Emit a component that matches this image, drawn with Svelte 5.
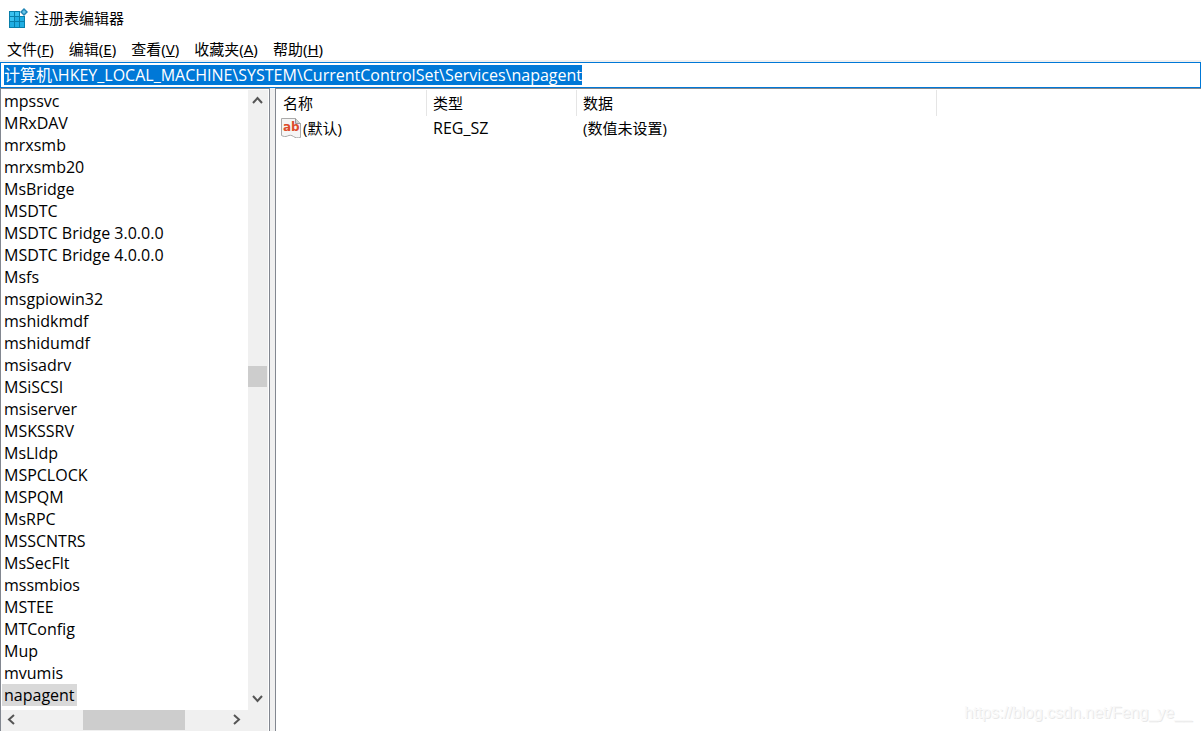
<script>
  import { onMount } from 'svelte';

  const menus = [
    ['文件', 'F'],
    ['编辑', 'E'],
    ['查看', 'V'],
    ['收藏夹', 'A'],
    ['帮助', 'H'],
  ];
  const keys = [
    'mpssvc', 'MRxDAV', 'mrxsmb', 'mrxsmb20', 'MsBridge', 'MSDTC',
    'MSDTC Bridge 3.0.0.0', 'MSDTC Bridge 4.0.0.0', 'Msfs', 'msgpiowin32',
    'mshidkmdf', 'mshidumdf', 'msisadrv', 'MSiSCSI', 'msiserver', 'MSKSSRV',
    'MsLldp', 'MSPCLOCK', 'MSPQM', 'MsRPC', 'MSSCNTRS', 'MsSecFlt',
    'mssmbios', 'MSTEE', 'MTConfig', 'Mup', 'mvumis', 'napagent',
  ];
  let selected = $state('napagent');
  let path = $state('计算机\\HKEY_LOCAL_MACHINE\\SYSTEM\\CurrentControlSet\\Services\\napagent');
  let address;

  onMount(() => {
    address.focus();
    address.select();
  });
</script>

{#snippet chevron(d, label)}
  <button class="arrow" aria-label={label}>
    <svg width="11" height="11" viewBox="0 0 11 11"><path {d} fill="none" stroke="#555" stroke-width="2" /></svg>
  </button>
{/snippet}

<div class="window">
  <header class="title">
    <svg width="20" height="20" viewBox="0 0 20 20" aria-hidden="true">
      <rect x="1" y="3" width="16" height="17" fill="#087eaa" />
      <path d="M2 4h4v4H2zM7 4h4v4H7zM2 9h4v4H2zM7 9h4v4H7zM12 9h4v4h-4zM2 14h4v5H2zM7 14h4v5H7zM12 14h4v5h-4z" fill="#20aee3" />
      <path d="M2 4h4v4H2zM7 4h4v4H7zM2 9h4v4H2z" fill="#39c2f0" />
      <path d="M12 2h6v6h-6z" fill="#fff" />
      <path d="M11 8h6v1h-6z" fill="#087eaa" />
      <path d="M16 0l4 4-4 4-4-4z" fill="#2185b5" />
      <path d="M16 2l2 2-2 2-2-2z" fill="#69c8ea" />
    </svg>
    <span>注册表编辑器</span>
  </header>

  <nav class="menu">
    {#each menus as [name, key]}
      <button>{name}(<u>{key}</u>)</button>
    {/each}
  </nav>

  <div class="address">
    <input type="text" aria-label="地址" spellcheck="false" bind:this={address} bind:value={path} />
  </div>

  <main>
    <section class="tree">
      <div class="upper">
        <ul>
          {#each keys as key}
            <li><button class:selected={key === selected} onclick={() => (selected = key)}>{key}</button></li>
          {/each}
        </ul>
        <div class="vbar">
          {@render chevron('M1 8l4.5-5L10 8', '向上滚动')}
          <div class="vtrack"><div class="vthumb"></div></div>
          {@render chevron('M1 3l4.5 5L10 3', '向下滚动')}
        </div>
      </div>
      <div class="hbar">
        {@render chevron('M8 1L3 5.5 8 10', '向左滚动')}
        <div class="htrack"><div class="hthumb"></div></div>
        {@render chevron('M3 1l5 4.5L3 10', '向右滚动')}
      </div>
    </section>
    <div class="splitter"></div>
    <section class="values">
      <table>
        <colgroup><col class="narrow" /><col class="narrow" /><col class="wide" /><col /></colgroup>
        <thead>
          <tr><th>名称</th><th>类型</th><th>数据</th><td></td></tr>
        </thead>
        <tbody>
          <tr>
            <td class="name">
              <div>
                <svg width="20" height="20" viewBox="0 0 20 20" aria-hidden="true">
                  <path d="M.5.5h14l5 5v14c-3 .5-5 .5-7-1s-4-1.500-6-.5-4 .5-6-.5z" fill="#f5f5f5" stroke="#aaa" />
                  <path d="M14.500.5v5h5" fill="#d0d0d0" stroke="#999" />
                  <text x="2" y="13">ab</text>
                </svg>
                <span>(默认)</span>
              </div>
            </td>
            <td class="type">REG_SZ</td>
            <td>(数值未设置)</td>
            <td></td>
          </tr>
        </tbody>
      </table>
      <p class="mark">https://blog.csdn.net/Feng_ye__</p>
    </section>
  </main>
</div>

<style>
  :global(body) { margin: 0; background: #fff; }
  .window {
    height: 100vh;
    display: flex;
    flex-direction: column;
    overflow: hidden;
    color: #000;
    font: 15px/22px "Open Sans", "Noto Sans CJK SC", sans-serif;
  }
  button, input { font: inherit; color: inherit; border: 0; padding: 0; margin: 0; background: none; }
  .title { display: flex; align-items: center; gap: 6px; height: 36px; padding: 0 0 2px 8px; flex: none; }
  .menu { display: flex; gap: 15px; height: 22px; padding-left: 7px; flex: none; font-family: "Noto Sans", "Noto Sans CJK SC", sans-serif; }
  .address {
    flex: none;
    display: flex;
    margin-top: 2px;
    padding: 2px 3px;
    border: 1px solid #0078d7;
    box-shadow: 0 -2px 0 #f0f0f0;
  }
  .address input {
    flex: 1;
    min-width: 0;
    height: 20px;
    font-size: 16px;
    line-height: 20px;
    outline: none;
    overflow: hidden;
  }
  .address input::selection { background: #0078d7; color: #fff; }
  main { flex: 1; display: flex; min-height: 0; }
  .tree {
    flex: none;
    width: 268px;
    display: flex;
    flex-direction: column;
    border: 1px solid #828790;
    border-bottom: 0;
  }
  .upper { flex: 1; display: flex; min-height: 0; padding: 1px 1px 0 0; }
  ul { flex: 1; margin: 0; padding: 0 0 0 1px; list-style: none; overflow: hidden; font-size: 16px; }
  li { height: 22px; }
  li button { display: block; height: 22px; padding: 0 2px; }
  .selected { background: #d9d9d9; }
  .vbar { flex: none; width: 19px; padding: 0 1px 2px 0; display: flex; flex-direction: column; background: #f0f0f0; }
  .arrow { flex: none; width: 19px; height: 20px; display: grid; place-items: center; }
  .vtrack { flex: 1; display: flex; flex-direction: column; }
  .vtrack::before { content: ""; flex: 256; }
  .vtrack::after { content: ""; flex: 301; }
  .vthumb { height: 21px; background: #cdcdcd; }
  .hbar { flex: none; height: 21px; display: flex; background: #f0f0f0; margin-right: 1px; padding-right: 22px; }
  .hbar .arrow, .hbar :global(.arrow) { height: 19px; width: 20px; }
  .htrack { flex: 1; display: flex; }
  .hthumb { width: 102px; height: 20px; margin-left: 62px; background: #cdcdcd; }
  .splitter { flex: none; width: 5px; background: #f0f0f0; }
  .values {
    flex: 1;
    min-width: 0;
    display: flex;
    flex-direction: column;
    justify-content: space-between;
    border-top: 1px solid #828790;
    border-left: 1px solid #828790;
    padding-left: 1px;
  }
  table { width: 100%; table-layout: fixed; border-collapse: separate; border-spacing: 0; margin-top: 1px; }
  .narrow { width: 150px; }
  .wide { width: 360px; }
  th, td { height: 24px; padding: 0 0 0 6px; text-align: left; font-weight: 400; }
  th { height: 26px; border-right: 1px solid #e5e5e5; }
  .type { font-size: 16px; }
  .name { padding-left: 4px; }
  .name div { display: flex; align-items: center; gap: 2px; }
  .name text { font: 700 12px "DejaVu Sans", sans-serif; fill: #dc4c2b; }
  .mark { margin: 0 9px 7px; text-align: right; color: #f9f9f9; text-shadow: 1px 1px 0 #e8e8e8; font: 16px/22px "Liberation Sans", sans-serif; }
</style>
